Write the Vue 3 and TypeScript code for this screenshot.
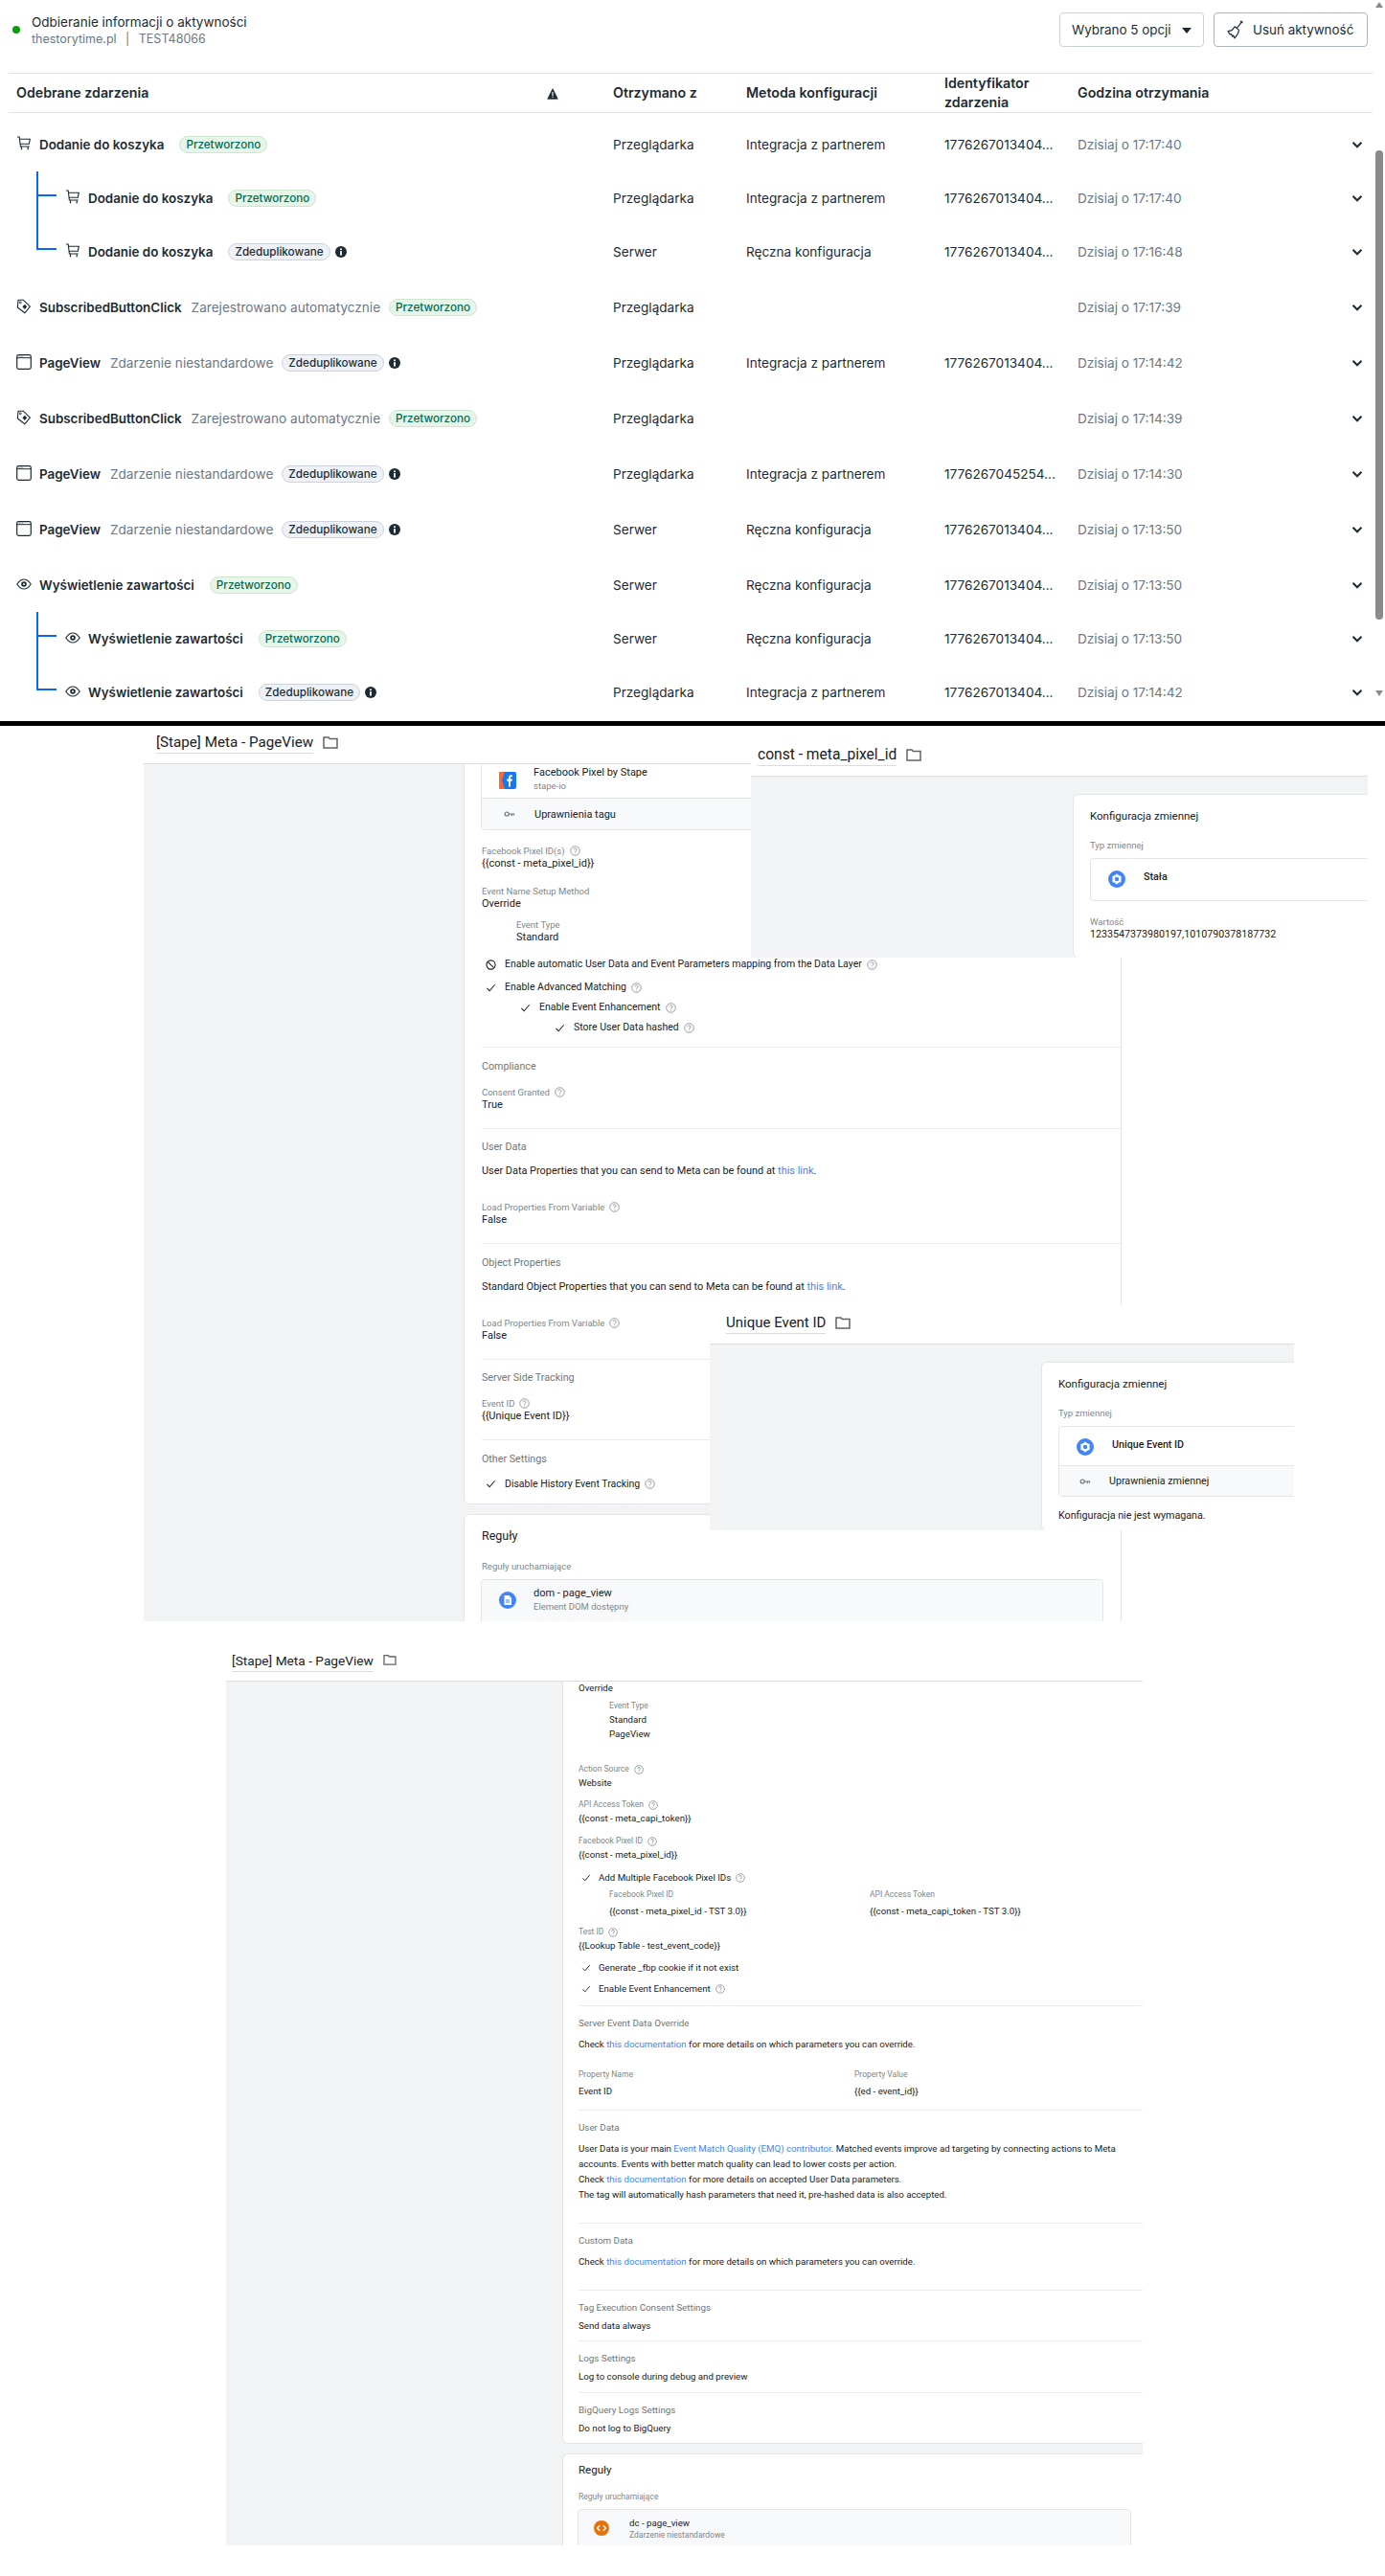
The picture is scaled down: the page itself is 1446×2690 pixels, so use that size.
<script setup lang="ts">
interface Row {
  icon: string
  name: string
  sub?: string
  status: 'ok' | 'dup'
  from: string
  method?: string
  id?: string
  time: string
  kind?: 'child' | 'last'
}
const rows: Row[] = [
  { icon: 'cart', name: 'Dodanie do koszyka', status: 'ok', from: 'Przeglądarka', method: 'Integracja z partnerem', id: '1776267013404...', time: 'Dzisiaj o 17:17:40' },
  { icon: 'cart', name: 'Dodanie do koszyka', status: 'ok', from: 'Przeglądarka', method: 'Integracja z partnerem', id: '1776267013404...', time: 'Dzisiaj o 17:17:40', kind: 'child' },
  { icon: 'cart', name: 'Dodanie do koszyka', status: 'dup', from: 'Serwer', method: 'Ręczna konfiguracja', id: '1776267013404...', time: 'Dzisiaj o 17:16:48', kind: 'last' },
  { icon: 'tag', name: 'SubscribedButtonClick', sub: 'Zarejestrowano automatycznie', status: 'ok', from: 'Przeglądarka', time: 'Dzisiaj o 17:17:39' },
  { icon: 'page', name: 'PageView', sub: 'Zdarzenie niestandardowe', status: 'dup', from: 'Przeglądarka', method: 'Integracja z partnerem', id: '1776267013404...', time: 'Dzisiaj o 17:14:42' },
  { icon: 'tag', name: 'SubscribedButtonClick', sub: 'Zarejestrowano automatycznie', status: 'ok', from: 'Przeglądarka', time: 'Dzisiaj o 17:14:39' },
  { icon: 'page', name: 'PageView', sub: 'Zdarzenie niestandardowe', status: 'dup', from: 'Przeglądarka', method: 'Integracja z partnerem', id: '1776267045254...', time: 'Dzisiaj o 17:14:30' },
  { icon: 'page', name: 'PageView', sub: 'Zdarzenie niestandardowe', status: 'dup', from: 'Serwer', method: 'Ręczna konfiguracja', id: '1776267013404...', time: 'Dzisiaj o 17:13:50' },
  { icon: 'eye', name: 'Wyświetlenie zawartości', status: 'ok', from: 'Serwer', method: 'Ręczna konfiguracja', id: '1776267013404...', time: 'Dzisiaj o 17:13:50' },
  { icon: 'eye', name: 'Wyświetlenie zawartości', status: 'ok', from: 'Serwer', method: 'Ręczna konfiguracja', id: '1776267013404...', time: 'Dzisiaj o 17:13:50', kind: 'child' },
  { icon: 'eye', name: 'Wyświetlenie zawartości', status: 'dup', from: 'Przeglądarka', method: 'Integracja z partnerem', id: '1776267013404...', time: 'Dzisiaj o 17:14:42', kind: 'last' },
]
const badgeText = { ok: 'Przetworzono', dup: 'Zdeduplikowane' }
</script>

<template>
  <div class="page">
    <svg class="sprite" width="0" height="0">
      <symbol id="i-cart" viewBox="0 0 16 16">
        <path d="M1 1h2.200l1.200 10h9.200M3.500 3.200h10.800l-.9 5H4.100M5.500 11v2.600M12.200 11v2.600M4.800 13.800h1.400M11.500 13.800h1.400" fill="none" stroke="currentColor" stroke-width="1.100" />
      </symbol>
      <symbol id="i-tag" viewBox="0 0 16 16">
        <path d="M2 1.200h5.200l7.200 7-5.600 6.600L1.400 9z" fill="none" stroke="currentColor" stroke-width="1.100" stroke-linejoin="round" />
        <circle cx="4.300" cy="3.800" r="1" fill="none" stroke="currentColor" stroke-width=".9" />
        <path d="M8.800 5.800l2.400 2.500-2.400 2.700-2.400-2.700z" fill="currentColor" />
      </symbol>
      <symbol id="i-page" viewBox="0 0 16 16">
        <rect x=".7" y=".7" width="14.600" height="14.600" rx="1.800" fill="none" stroke="currentColor" stroke-width="1.200" />
        <path d="M1 3.700h14" stroke="currentColor" stroke-width="1" />
        <path d="M2.800 2.200h.8M4.600 2.200h.8M6.400 2.200h.8" stroke="currentColor" stroke-width=".8" />
      </symbol>
      <symbol id="i-eye" viewBox="0 0 16 16">
        <path d="M.8 8C3 4.600 5.400 3 8 3s5 1.600 7.200 5C13 11.400 10.600 13 8 13S3 11.400.8 8z" fill="none" stroke="currentColor" stroke-width="1.100" />
        <circle cx="8" cy="8" r="2.800" fill="currentColor" />
        <circle cx="8" cy="8" r="1" fill="#fff" />
      </symbol>
      <symbol id="i-info" viewBox="0 0 16 16">
        <circle cx="8" cy="8" r="8" fill="currentColor" />
        <rect x="6.800" y="6.800" width="2.400" height="6" fill="#fff" />
        <circle cx="8" cy="4.300" r="1.400" fill="#fff" />
      </symbol>
      <symbol id="i-warn" viewBox="0 0 16 16">
        <path d="M8 1l7 14H1z" fill="currentColor" stroke="currentColor" stroke-linejoin="round" />
        <rect x="7.200" y="5.500" width="1.600" height="5" fill="#fff" />
        <rect x="7.200" y="11.500" width="1.600" height="1.600" fill="#fff" />
      </symbol>
      <symbol id="i-chev" viewBox="0 0 12 12">
        <path d="M1.500 3.800L6 8.300l4.500-4.500" fill="none" stroke="currentColor" stroke-width="2" />
      </symbol>
      <symbol id="i-broom" viewBox="0 0 20 20">
        <path d="M18 1.200l-5.500 7M10.200 6.800l4.300 3.600-1 3.600-3.500 4.800-1.300-2.800-1.100 1-1-2.500-1.500.5-2-3.400 4-.9zM15.800 .9l2.700 2.200" fill="none" stroke="currentColor" stroke-width="1.200" stroke-linejoin="round" />
      </symbol>
      <symbol id="i-folder" viewBox="0 0 16 14">
        <path d="M1 2h5l1.300 1.500H15V13H1z" fill="none" stroke="currentColor" stroke-width="1.500" />
      </symbol>
      <symbol id="i-help" viewBox="0 0 12 12">
        <circle cx="6" cy="6" r="5.200" fill="none" stroke="currentColor" stroke-width=".9" />
        <path d="M4.300 4.700C4.400 3.600 5.100 3 6 3s1.700.6 1.700 1.500c0 1.300-1.600 1.400-1.600 2.800M6.100 8.300v1" fill="none" stroke="currentColor" stroke-width=".9" />
      </symbol>
      <symbol id="i-check" viewBox="0 0 12 12">
        <path d="M1.500 6.500L4.500 9.500 10.500 2.500" fill="none" stroke="currentColor" stroke-width="1.100" />
      </symbol>
      <symbol id="i-ban" viewBox="0 0 12 12">
        <circle cx="6" cy="6" r="5" fill="none" stroke="currentColor" stroke-width="1.200" />
        <path d="M2.500 2.500l7 7" stroke="currentColor" stroke-width="1.200" />
      </symbol>
      <symbol id="i-key" viewBox="0 0 14 10">
        <circle cx="3.500" cy="5" r="2.500" fill="none" stroke="currentColor" stroke-width="1.500" />
        <path d="M6 5h7.500M10 5v2.500M12.500 5v2" stroke="currentColor" stroke-width="1.500" />
      </symbol>
      <symbol id="i-gear" viewBox="0 0 18 18">
        <circle cx="9" cy="9" r="9" fill="#4285f4" />
        <circle cx="9" cy="9" r="3.400" fill="none" stroke="#fff" stroke-width="2.400" />
        <path d="M9 3.800v2M9 12.200v2M4.500 6.400l1.700 1M11.800 10.600l1.700 1M4.500 11.600l1.700-1M11.800 7.400l1.700-1" stroke="#fff" stroke-width="1.800" />
      </symbol>
      <symbol id="i-doc" viewBox="0 0 18 18">
        <circle cx="9" cy="9" r="9" fill="#4285f4" />
        <path d="M5.500 4h4.800l2.700 2.800V14H5.500z" fill="#fff" />
        <path d="M7 9h4M7 11h4" stroke="#4285f4" stroke-width="1" />
      </symbol>
      <symbol id="i-code" viewBox="0 0 18 18">
        <circle cx="9" cy="9" r="9" fill="#e8710a" />
        <path d="M7 5.800L3.900 9 7 12.200M11 5.800L14.100 9 11 12.200" fill="none" stroke="#fff" stroke-width="1.600" />
      </symbol>
      <symbol id="i-fb" viewBox="0 0 18 18">
        <rect width="18" height="18" rx="2" fill="#1877f2" />
        <path d="M0 2a2 2 0 0 1 2-2h4L3 9l3 9H2a2 2 0 0 1-2-2z" fill="#ff6a2b" />
        <path d="M10 15.500V9.700H8.200V7.600H10V6c0-1.800 1-2.700 2.600-2.700h1.200v2h-.9c-.7 0-.9.400-.9 1v1.300h1.800l-.3 2.100h-1.500v5.800z" fill="#fff" />
      </symbol>
    </svg>

    <section class="activity">
      <header class="top">
        <div class="top-left">
          <span class="dot"></span>
          <div>
            <div class="top-title">Odbieranie informacji o aktywności</div>
            <div class="top-sub">thestorytime.pl <span class="sep">|</span> TEST48066</div>
          </div>
        </div>
        <div class="top-actions">
          <button class="btn btn-select">Wybrano 5 opcji <span class="caret"></span></button>
          <button class="btn btn-clear"><svg class="broom"><use href="#i-broom" /></svg>Usuń aktywność</button>
        </div>
      </header>

      <div class="grid head">
        <div class="c-name head-name">Odebrane zdarzenia<svg class="warn"><use href="#i-warn" /></svg></div>
        <div>Otrzymano z</div>
        <div>Metoda konfiguracji</div>
        <div class="wrap-cell">Identyfikator zdarzenia</div>
        <div>Godzina otrzymania</div>
        <div></div>
      </div>

      <div class="list">
        <div v-for="(r, i) in rows" :key="i" class="grid row" :class="r.kind ? 'row-sub' : ''">
          <div class="c-name" :class="r.kind ? 'indent' : ''">
            <span v-if="r.kind" class="branch" :class="r.kind"></span>
            <svg class="ev"><use :href="'#i-' + r.icon" /></svg>
            <span class="name">{{ r.name }}</span>
            <span v-if="r.sub" class="sub">{{ r.sub }}</span>
            <span class="badge" :class="[r.status, r.sub ? '' : 'plain']">{{ badgeText[r.status] }}</span>
            <svg v-if="r.status === 'dup'" class="info"><use href="#i-info" /></svg>
          </div>
          <div>{{ r.from }}</div>
          <div>{{ r.method }}</div>
          <div>{{ r.id }}</div>
          <div class="time">{{ r.time }}</div>
          <svg class="chev"><use href="#i-chev" /></svg>
        </div>
      </div>
      <div class="scroll">
        <span class="arrow up"></span>
        <span class="thumb"></span>
        <span class="arrow down"></span>
      </div>
    </section>

    <div class="black"></div>

    <div class="collage">
      <!-- tag A -->
      <section class="shot shot-a">
        <div class="shot-head">
          <span class="shot-title">[Stape] Meta - PageView</span>
          <svg class="folder"><use href="#i-folder" /></svg>
        </div>
        <div class="shot-body">
          <div class="rail"></div>
          <div class="col">
            <div class="card">
              <div class="tbox">
                <div class="tbox-main">
                  <svg class="ic18"><use href="#i-fb" /></svg>
                  <div>
                    <div class="val">Facebook Pixel by Stape</div>
                    <div class="lbl2">stape-io</div>
                  </div>
                </div>
                <div class="tbox-perm">
                  <svg class="key"><use href="#i-key" /></svg>
                  <span class="val">Uprawnienia tagu</span>
                </div>
              </div>
              <div class="field f15">
                <div class="lbl">Facebook Pixel ID(s) <svg class="help"><use href="#i-help" /></svg></div>
                <div class="val">&#123;&#123;const - meta_pixel_id&#125;&#125;</div>
              </div>
              <div class="field f16">
                <div class="lbl">Event Name Setup Method</div>
                <div class="val">Override</div>
              </div>
              <div class="field f9 nest">
                <div class="lbl">Event Type</div>
                <div class="val">Standard</div>
              </div>
              <div class="chk m15"><svg class="ck"><use href="#i-ban" /></svg>Enable automatic User Data and Event Parameters mapping from the Data Layer <svg class="help"><use href="#i-help" /></svg></div>
              <div class="chk m10"><svg class="ck"><use href="#i-check" /></svg>Enable Advanced Matching <svg class="help"><use href="#i-help" /></svg></div>
              <div class="chk m7 n1"><svg class="ck"><use href="#i-check" /></svg>Enable Event Enhancement <svg class="help"><use href="#i-help" /></svg></div>
              <div class="chk m7 n2"><svg class="ck"><use href="#i-check" /></svg>Store User Data hashed <svg class="help"><use href="#i-help" /></svg></div>
              <div class="rule r13"></div>

              <div class="sec">Compliance</div>
              <div class="field f13">
                <div class="lbl">Consent Granted <svg class="help"><use href="#i-help" /></svg></div>
                <div class="val">True</div>
              </div>
              <div class="rule r18"></div>

              <div class="sec">User Data</div>
              <div class="para">User Data Properties that you can send to Meta can be found at <a>this link</a>.</div>
              <div class="field f24">
                <div class="lbl">Load Properties From Variable <svg class="help"><use href="#i-help" /></svg></div>
                <div class="val">False</div>
              </div>
              <div class="rule r18"></div>

              <div class="sec">Object Properties</div>
              <div class="para">Standard Object Properties that you can send to Meta can be found at <a>this link</a>.</div>
              <div class="field f24">
                <div class="lbl">Load Properties From Variable <svg class="help"><use href="#i-help" /></svg></div>
                <div class="val">False</div>
              </div>
              <div class="rule r18"></div>

              <div class="sec">Server Side Tracking</div>
              <div class="field f13">
                <div class="lbl">Event ID <svg class="help"><use href="#i-help" /></svg></div>
                <div class="val">&#123;&#123;Unique Event ID&#125;&#125;</div>
              </div>
              <div class="rule r18"></div>

              <div class="sec">Other Settings</div>
              <div class="chk m12 end"><svg class="ck"><use href="#i-check" /></svg>Disable History Event Tracking <svg class="help"><use href="#i-help" /></svg></div>
            </div>
            <div class="card rules">
              <div class="rules-title">Reguły</div>
              <div class="lbl rules-lbl">Reguły uruchamiające</div>
              <div class="trig">
                <svg class="ic18"><use href="#i-doc" /></svg>
                <div>
                  <div class="val">dom - page_view</div>
                  <div class="lbl2">Element DOM dostępny</div>
                </div>
              </div>
            </div>
          </div>
        </div>
      </section>

      <!-- constant -->
      <section class="shot float float-const">
        <div class="shot-head">
          <span class="shot-title">const - meta_pixel_id</span>
          <svg class="folder"><use href="#i-folder" /></svg>
        </div>
        <div class="float-body">
          <div class="vcard">
            <div class="v-title">Konfiguracja zmiennej</div>
            <div class="lbl v-lbl">Typ zmiennej</div>
            <div class="vbox">
              <div class="vbox-main"><svg class="ic18"><use href="#i-gear" /></svg><b class="val">Stała</b></div>
            </div>
            <div class="field f15">
              <div class="lbl">Wartość</div>
              <div class="val">1233547373980197,1010790378187732</div>
            </div>
          </div>
        </div>
      </section>

      <!-- unique event id -->
      <section class="shot float float-uid">
        <div class="shot-head">
          <span class="shot-title">Unique Event ID</span>
          <svg class="folder"><use href="#i-folder" /></svg>
        </div>
        <div class="float-body">
          <div class="vcard">
            <div class="v-title">Konfiguracja zmiennej</div>
            <div class="lbl v-lbl">Typ zmiennej</div>
            <div class="vbox">
              <div class="vbox-main"><svg class="ic18"><use href="#i-gear" /></svg><b class="val">Unique Event ID</b></div>
              <div class="vbox-perm"><svg class="key"><use href="#i-key" /></svg><span class="val">Uprawnienia zmiennej</span></div>
            </div>
            <div class="val v-none">Konfiguracja nie jest wymagana.</div>
          </div>
        </div>
      </section>

      <!-- tag C -->
      <section class="shot shot-c">
        <div class="shot-head">
          <span class="shot-title">[Stape] Meta - PageView</span>
          <svg class="folder thin"><use href="#i-folder" /></svg>
        </div>
        <div class="shot-body">
          <div class="rail"></div>
          <div class="col">
            <div class="card">
              <div class="val">Override</div>
              <div class="nest">
                <div class="lbl g5">Event Type</div>
                <div class="val g1">Standard</div>
                <div class="val g2">PageView</div>
              </div>
              <div class="field c23">
                <div class="lbl">Action Source <svg class="help"><use href="#i-help" /></svg></div>
                <div class="val">Website</div>
              </div>
              <div class="field c10">
                <div class="lbl">API Access Token <svg class="help"><use href="#i-help" /></svg></div>
                <div class="val">&#123;&#123;const - meta_capi_token&#125;&#125;</div>
              </div>
              <div class="field c11">
                <div class="lbl">Facebook Pixel ID <svg class="help"><use href="#i-help" /></svg></div>
                <div class="val">&#123;&#123;const - meta_pixel_id&#125;&#125;</div>
              </div>
              <div class="chk c11"><svg class="ck"><use href="#i-check" /></svg>Add Multiple Facebook Pixel IDs <svg class="help"><use href="#i-help" /></svg></div>
              <div class="pair nest">
                <div>
                  <div class="lbl">Facebook Pixel ID</div>
                  <div class="val pv">&#123;&#123;const - meta_pixel_id - TST 3.0&#125;&#125;</div>
                </div>
                <div>
                  <div class="lbl">API Access Token</div>
                  <div class="val pv">&#123;&#123;const - meta_capi_token - TST 3.0&#125;&#125;</div>
                </div>
              </div>
              <div class="field c8">
                <div class="lbl">Test ID <svg class="help"><use href="#i-help" /></svg></div>
                <div class="val">&#123;&#123;Lookup Table - test_event_code&#125;&#125;</div>
              </div>
              <div class="chk c10"><svg class="ck"><use href="#i-check" /></svg>Generate _fbp cookie if it not exist</div>
              <div class="chk c8"><svg class="ck"><use href="#i-check" /></svg>Enable Event Enhancement <svg class="help"><use href="#i-help" /></svg></div>
              <div class="rule r10"></div>

              <div class="sec">Server Event Data Override</div>
              <div class="para">Check <a>this documentation</a> for more details on which parameters you can override.</div>
              <div class="props">
                <div><div class="lbl">Property Name</div><div class="val pv">Event ID</div></div>
                <div><div class="lbl">Property Value</div><div class="val pv">&#123;&#123;ed - event_id&#125;&#125;</div></div>
              </div>
              <div class="rule r12"></div>

              <div class="sec">User Data</div>
              <div class="para long">
                User Data is your main <a>Event Match Quality (EMQ) contributor</a>. Matched events improve ad targeting by connecting actions to Meta<br />
                accounts. Events with better match quality can lead to lower costs per action.<br />
                Check <a>this documentation</a> for more details on accepted User Data parameters.<br />
                The tag will automatically hash parameters that need it, pre-hashed data is also accepted.
              </div>
              <div class="rule r21"></div>

              <div class="sec">Custom Data</div>
              <div class="para">Check <a>this documentation</a> for more details on which parameters you can override.</div>
              <div class="rule r22"></div>

              <div class="sec">Tag Execution Consent Settings</div>
              <div class="val tight">Send data always</div>
              <div class="rule r8"></div>

              <div class="sec">Logs Settings</div>
              <div class="val tight">Log to console during debug and preview</div>
              <div class="rule r9"></div>

              <div class="sec">BigQuery Logs Settings</div>
              <div class="val tight last">Do not log to BigQuery</div>
            </div>
            <div class="card rules">
              <div class="rules-title">Reguły</div>
              <div class="lbl rules-lbl">Reguły uruchamiające</div>
              <div class="trig">
                <svg class="ic18"><use href="#i-code" /></svg>
                <div>
                  <div class="val">dc - page_view</div>
                  <div class="lbl2">Zdarzenie niestandardowe</div>
                </div>
              </div>
            </div>
          </div>
        </div>
      </section>
    </div>
  </div>
</template>

<style>
html, body { margin: 0; background: #fff; }
</style>

<style scoped>
.page { width: 1446px; height: 2690px; position: relative; overflow: hidden; background: #fff; font-family: Inter, "Liberation Sans", sans-serif; color: #1c2b33; }
.sprite { position: absolute; }
svg { display: block; }

/* activity log */
.activity { position: relative; height: 753px; overflow: hidden; font-size: 13.600px; }
.top { height: 77px; margin: 0 13px 0 9px; box-sizing: border-box; border-bottom: 1px solid #dfe2e6; display: flex; justify-content: space-between; padding: 13px 5px 0 4px; }
.top-left { display: flex; align-items: center; gap: 12px; height: 36px; }
.dot { width: 8px; height: 8px; border-radius: 50%; background: #0a9e0a; }
.top-title { font-size: 13.500px; line-height: 20px; }
.top-sub { font-size: 12.500px; line-height: 16px; color: #67788a; }
.sep { margin: 0 6px; }
.top-actions { display: flex; gap: 10px; }
.btn { height: 36px; box-sizing: border-box; background: #fff; border: 1px solid #cbd2d9; border-radius: 4px; font: 13.400px Inter, sans-serif; color: #1c2b33; display: flex; align-items: center; padding: 0; }
.btn-select { width: 151px; padding-left: 12px; gap: 11px; }
.btn-clear { width: 161px; padding-left: 11px; gap: 9px; border-color: #a9b4bf; }
.caret { width: 0; height: 0; border: 5px solid transparent; border-top: 6px solid #1c2b33; margin-top: 6px; }
.broom { width: 20px; height: 20px; }

.grid { display: grid; grid-template-columns: 623px 139px 207px 139px 1fr 24px; align-items: center; margin: 0 13px 0 9px; padding-left: 8px; }
.head { height: 41px; box-sizing: border-box; border-bottom: 1px solid #dfe2e6; font-size: 14.200px; font-weight: 600; line-height: 20px; }
.head-name { display: flex; justify-content: space-between; padding-right: 57px; }
.warn { width: 12px; height: 12px; color: #1c2b33; margin-top: 1px; }
.wrap-cell { width: 110px; }
.list { padding-top: 4px; height: 612px; overflow: hidden; }
.row { height: 58px; margin-right: 17px; }
.row-sub { height: 56px; margin-top: -1px; margin-bottom: 1px; }
.c-name { display: flex; align-items: center; position: relative; }
.indent { padding-left: 51px; }
.branch { position: absolute; left: 21px; width: 21px; border-left: 2px solid #0866ff; border-bottom: 2px solid #0866ff; box-sizing: border-box; }
.branch.child { top: -19px; height: 26px; }
.branch.last { top: -50px; height: 57px; }
.ev { width: 16px; height: 16px; margin-right: 8px; margin-top: -3px; flex: none; }
.name { font-size: 13.400px; font-weight: 600; white-space: nowrap; }
.sub { color: #67788a; margin-left: 10px; white-space: nowrap; }
.badge { height: 18px; box-sizing: border-box; border-radius: 9px; border: 1px solid; font-size: 11.700px; font-weight: 500; line-height: 16px; padding: 0 6px; margin-left: 9px; white-space: nowrap; }
.badge.plain { margin-left: 16px; }
.badge.ok { background: #e8f5e9; border-color: #cbe5cf; color: #006b4f; }
.badge.dup { background: #eef1f6; border-color: #cbd2dc; color: #1c2b33; }
.info { width: 12px; height: 12px; margin-left: 5px; }
.time { color: #67788a; }
.chev { width: 12px; height: 12px; justify-self: center; }
.scroll { position: absolute; top: 0; right: 0; width: 12px; height: 734px; }
.thumb { position: absolute; left: 2px; top: 157px; width: 8px; height: 490px; border-radius: 4px; background: #8b8b8b; }
.arrow { position: absolute; left: 2px; width: 0; height: 0; border: 4px solid transparent; }
.arrow.up { top: -2px; border-bottom: 6px solid #8b8b8b; }
.arrow.down { bottom: 3px; border-top: 6px solid #8b8b8b; }

.black { height: 5px; background: #000; }

/* collage of tag-manager captures */
.collage { position: relative; display: flex; flex-direction: column; color: #202124; font-family: Roboto, "Liberation Sans", sans-serif; }
.shot { background: #fff; }
.shot-head { height: 34px; box-sizing: border-box; border-bottom: 1px solid #dcdee0; padding-left: 13px; display: flex; align-items: flex-start; gap: 10px; }
.shot-title { font-size: 15.200px; line-height: 22px; border-bottom: 1px solid #dadce0; }
.folder { width: 16px; height: 14px; margin-top: 4px; color: #5f6368; }
.folder.thin { color: #5f6368; width: 14px; height: 12px; }
.shot-body { display: flex; overflow: hidden; }
.rail { width: 334px; flex: none; background: #f1f3f4; }
.col { flex: 1; min-width: 0; background: #f1f3f4; }
.card { background: #fff; border: 1px solid #e3e5e8; border-top: 0; border-radius: 0 0 6px 6px; padding-left: 18px; }
.rules { margin-top: 10px; border-top: 1px solid #e3e5e8; border-radius: 6px 6px 0 0; border-bottom: 0; padding-right: 18px; }

.val { font-size: 11px; line-height: 13px; color: #202124; white-space: nowrap; }
.lbl { font-size: 9.500px; line-height: 13px; color: #80868b; display: flex; align-items: center; gap: 5px; white-space: nowrap; }
.lbl2 { font-size: 9.500px; line-height: 13px; color: #80868b; }
.help { width: 11px; height: 11px; color: #80868b; flex: none; }
.sec { font-size: 10.700px; line-height: 14px; color: #70757a; padding-top: 12.500px; }
.para { font-size: 10.900px; line-height: 14px; margin-top: 11px; white-space: nowrap; }
.para a, .long a { color: #4285f4; }
.rule { border-bottom: 1px solid #e8eaed; }
.r8 { margin-top: 8px; } .r9 { margin-top: 9px; } .r10 { margin-top: 10px; } .r12 { margin-top: 12px; }
.r13 { margin-top: 13px; } .r18 { margin-top: 18px; } .r21 { margin-top: 21px; } .r22 { margin-top: 22px; }
.f9 { margin-top: 9px; } .f13 { margin-top: 13px; } .f15 { margin-top: 15px; } .f16 { margin-top: 16px; } .f24 { margin-top: 24px; }
.nest { padding-left: 36px; }
.chk { display: flex; align-items: center; font-size: 10.500px; line-height: 14px; white-space: nowrap; }
.chk .ck { width: 11px; height: 11px; margin: 0 9px 0 4px; flex: none; }
.chk .help { margin-left: 5px; }
.m7 { margin-top: 7px; } .m10 { margin-top: 10px; } .m12 { margin-top: 12px; } .m15 { margin-top: 15px; }
.n1 { padding-left: 36px; } .n2 { padding-left: 72px; }
.end { padding-bottom: 13px; }

.tbox { margin-left: -1px; margin-right: -19px; border-left: 1px solid #e3e5e8; border-bottom: 1px solid #e3e5e8; border-radius: 0 0 0 4px; }
.tbox-main { height: 36px; box-sizing: border-box; border-bottom: 1px solid #e3e5e8; display: flex; gap: 18px; padding: 2px 0 0 18px; align-items: flex-start; }
.tbox-main .val { line-height: 14px; }
.tbox-main .lbl2 { line-height: 14px; }
.tbox-main .ic18 { margin-top: 6px; }
.tbox-perm { height: 32px; box-sizing: border-box; background: #f8f9fa; display: flex; align-items: center; padding-left: 23px; gap: 20px; }
.ic18 { width: 18px; height: 18px; flex: none; }
.key { width: 12px; height: 8px; color: #70757a; flex: none; }

.rules-title { font-size: 12.500px; line-height: 16px; padding-top: 14px; }
.rules-lbl { margin-top: 17px; }
.trig { margin: 7px 0 0 -1px; height: 60px; box-sizing: border-box; border: 1px solid #e3e5e8; border-radius: 4px; background: #f8f9fa; display: flex; gap: 18px; padding: 7px 0 0 18px; }
.trig .ic18 { margin-top: 5px; }
.trig .val { line-height: 14px; }

/* floating captures */
.shot-a { margin: 6px 0 0 150px; width: 1021px; flex: none; }
.shot-a .shot-body { height: 895px; }
.float { position: absolute; }
.float-body { background: #f1f3f4; display: flex; justify-content: flex-end; overflow: hidden; }
.float-const { left: 784px; top: 19px; width: 644px; }
.float-const .shot-head { padding-left: 7px; }
.float-const .shot-title { font-size: 15.600px; }
.float-const .float-body { height: 189px; }
.float-uid { left: 741px; top: 605px; width: 610px; }
.float-uid .shot-head { height: 41px; padding: 7px 0 0 17px; }
.float-uid .shot-title { font-size: 15px; }
.float-uid .float-body { height: 194px; }
.vcard { width: 308px; margin-top: 18px; background: #fff; border: 1px solid #e3e5e8; border-right: 0; border-bottom: 0; border-radius: 6px 0 0 6px; padding: 14px 0 0 17px; box-sizing: border-box; }
.float-uid .vcard { width: 264px; }
.v-title { font-size: 11.500px; line-height: 16px; }
.v-lbl { margin-top: 16px; }
.vbox { margin-top: 7px; border: 1px solid #e3e5e8; border-right: 0; border-radius: 4px 0 0 4px; }
.vbox-main { height: 43px; box-sizing: border-box; display: flex; gap: 19px; padding: 12px 0 0 18px; }
.vbox-main .val { font-weight: 500; }
.float-uid .vbox-main { height: 41px; border-bottom: 1px solid #e3e5e8; }
.vbox-perm { height: 31px; box-sizing: border-box; background: #f8f9fa; display: flex; align-items: center; gap: 19px; padding-left: 21px; }
.v-none { margin-top: 13px; }
.float .val { font-size: 10.700px; }

/* tag C */
.shot-c { margin: 30px 0 0 236px; width: 957px; flex: none; }
.shot-c .shot-head { height: 33px; padding-left: 6px; }
.shot-c .shot-title { font-size: 13.700px; }
.shot-c .shot-body { height: 902px; }
.shot-c .rail { width: 351px; }
.shot-c .card { padding-left: 16px; border-right: 0; border-radius: 0 0 0 6px; }
.shot-c .rules { border-radius: 6px 0 0 0; padding-right: 12px; }
.shot-c .val, .shot-c .chk, .shot-c .para { font-size: 9.700px; }
.shot-c .lbl, .shot-c .lbl2 { font-size: 8.500px; }
.shot-c .sec { font-size: 9.800px; padding-top: 11px; }
.shot-c .val { line-height: 14px; }
.shot-c .field .val { line-height: 13px; margin-top: 1px; }
.shot-c .help { width: 10px; height: 10px; }
.shot-c .nest { padding-left: 32px; }
.g5 { margin-top: 5px; } .g1 { margin-top: 1px; } .g2 { margin-top: 1px; }
.c8 { margin-top: 8px; } .c10 { margin-top: 10px; } .c11 { margin-top: 11px; } .c23 { margin-top: 23px; }
.shot-c .chk .ck { width: 10px; height: 10px; margin: 0 8px 0 3px; }
.pair { display: grid; grid-template-columns: 272px 1fr; margin-top: 4px; }
.pv { margin-top: 4px; }
.props { display: grid; grid-template-columns: 288px 1fr; margin-top: 18px; }
.shot-c .para { margin-top: 8px; line-height: 14px; }
.shot-c .para.long { margin-top: 7px; line-height: 16px; }
.tight { margin-top: 5px; }
.last { padding-bottom: 8px; }
.shot-c .rules-title { font-size: 11.500px; padding-top: 8px; }
.shot-c .rules-lbl { margin-top: 14px; }
.shot-c .trig { margin-top: 6px; gap: 21px; padding-left: 16px; }
.shot-c .trig .ic18 { width: 16px; height: 16px; margin-top: 4px; }
.shot-c .trig .lbl2 { line-height: 10px; }
</style>
